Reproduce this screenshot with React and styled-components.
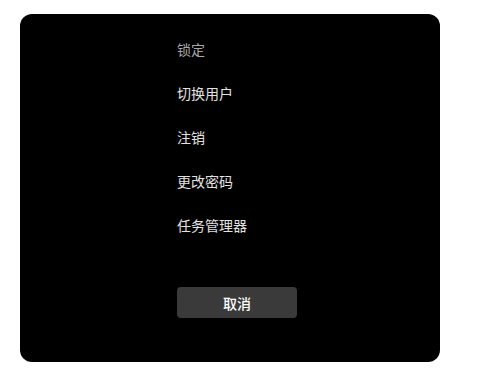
import React from "react";
import styled, { createGlobalStyle } from "styled-components";

const GlobalStyle = createGlobalStyle`
  body {
    margin: 0;
    background: #ffffff;
    font-family: "Noto Sans CJK SC", "Noto Sans", sans-serif;
  }
`;

const Page = styled.div`
  width: 490px;
  height: 374px;
  padding: 14px 0 0 20px;
  box-sizing: border-box;
`;

const Panel = styled.div`
  width: 420px;
  height: 348px;
  background: #000000;
  border-radius: 12px;
  padding: 13px 0 0 157px;
  box-sizing: border-box;
  display: flex;
  flex-direction: column;
`;

const Menu = styled.ul`
  list-style: none;
  margin: 0;
  padding: 0;
  display: flex;
  flex-direction: column;
`;

const MenuItem = styled.li`
  height: 44px;
  line-height: 44px;
  font-size: 14px;
  color: ${(p) => (p.$dim ? "#a8a8a8" : "#e2e2e2")};
`;

const CancelButton = styled.button`
  margin-top: 40px;
  width: 120px;
  height: 31px;
  border: none;
  border-radius: 4px;
  background: #3a3a3a;
  color: #ffffff;
  font-family: inherit;
  font-size: 14px;
  font-weight: 500;
  padding: 0;
  cursor: pointer;
`;

const items = ["锁定", "切换用户", "注销", "更改密码", "任务管理器"];

const App = () => {
  return (
    <>
      <GlobalStyle />
      <Page>
        <Panel>
          <Menu>
            {items.map((label, i) => (
              <MenuItem key={label} $dim={i === 0}>
                {label}
              </MenuItem>
            ))}
          </Menu>
          <CancelButton>取消</CancelButton>
        </Panel>
      </Page>
    </>
  );
};

export default App;
